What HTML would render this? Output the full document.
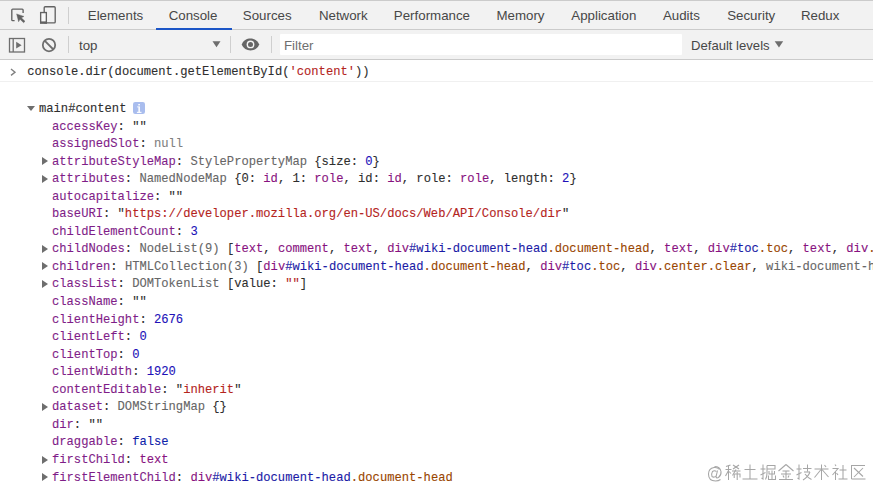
<!DOCTYPE html>
<html><head><meta charset="utf-8">
<style>
*{margin:0;padding:0;box-sizing:border-box}
html,body{width:873px;height:489px;overflow:hidden;background:#fff}
body{position:relative;font-family:"Liberation Sans",sans-serif}
.abs{position:absolute}
#tabbar{left:0;top:0;width:873px;height:30px;background:#f2f2f2;border-top:1px solid #cbcbcb;border-bottom:1px solid #cbcbcb}
.tab{position:absolute;top:7px;font-size:13.3px;line-height:16px;color:#474747;white-space:nowrap}
#toolbar{left:0;top:30px;width:873px;height:30px;background:#f2f2f2;border-bottom:1px solid #cbcbcb}
.sep{position:absolute;width:1px;background:#cfcfcf}
.mono{font-family:"Liberation Mono",monospace;font-size:12.15px;white-space:pre;color:#2e2e2e;-webkit-text-stroke:0.1px currentColor}
.row{position:absolute;left:0;height:17.55px;line-height:17.55px;width:873px}
.p{color:#7f1d88}
.s{color:#b4241d}
.n{color:#2010b8}
.g{color:#808080}
.o{color:#666}
.t{color:#881280}
.id{color:#1a1aa6}
.c{color:#994500}
.b{color:#0d22aa}
.tri{position:absolute;width:0;height:0}
.tr{border-left:6.2px solid #6e6e6e;border-top:4px solid transparent;border-bottom:4px solid transparent}
.td{border-top:5.8px solid #6e6e6e;border-left:4.2px solid transparent;border-right:4.2px solid transparent}
.info{display:inline-block;position:relative;top:1px;vertical-align:top;margin-left:-1px}
</style></head><body>
<div id="tabbar" class="abs">
  <svg class="abs" style="left:0;top:-1px" width="70" height="30" viewBox="0 0 70 30">
    <path d="M14.6 20.6 H12.7 a0.9 0.9 0 0 1 -0.9 -0.9 V10 a0.9 0.9 0 0 1 0.9 -0.9 H22.2 a0.9 0.9 0 0 1 0.9 0.9 V13" fill="none" stroke="#626262" stroke-width="1.35"/>
    <path d="M16.6 13.9 L24 16.4 L21.4 17.8 L25 21.3 L23.6 22.7 L20 19.2 L18.6 21.8 Z" fill="#626262" stroke="#626262" stroke-width="0.4" stroke-linejoin="round"/>
    <rect x="44.2" y="6.7" width="11" height="16.2" rx="1" fill="none" stroke="#626262" stroke-width="1.35"/>
    <rect x="40.65" y="12.55" width="5.7" height="10.4" fill="#f9f9f9" stroke="#626262" stroke-width="1.35"/>
    <rect x="40" y="21.4" width="7" height="2.2" fill="#626262"/>
  </svg>
  <div class="sep" style="left:68px;top:6px;height:17px"></div>
  <div class="tab" style="left:87.8px">Elements</div>
  <div class="tab" style="left:168.7px">Console</div>
  <div class="tab" style="left:242.8px">Sources</div>
  <div class="tab" style="left:318.9px">Network</div>
  <div class="tab" style="left:393.85px">Performance</div>
  <div class="tab" style="left:496.45px">Memory</div>
  <div class="tab" style="left:571.3px">Application</div>
  <div class="tab" style="left:662.9px">Audits</div>
  <div class="tab" style="left:727.2px">Security</div>
  <div class="tab" style="left:800.9px">Redux</div>
  <div class="abs" style="left:156px;top:27px;width:76px;height:2px;background:#1c56c7"></div>
</div>
<div id="toolbar" class="abs">
  <svg class="abs" style="left:0;top:0" width="280" height="29" viewBox="0 0 280 29">
    <rect x="9.5" y="8.5" width="15" height="13.5" fill="none" stroke="#6e6e6e" stroke-width="1.3"/>
    <line x1="13.2" y1="8.5" x2="13.2" y2="22" stroke="#6e6e6e" stroke-width="1.3"/>
    <path d="M16.2 11.7 L21.6 15.15 L16.2 18.6 Z" fill="#6e6e6e"/>
    <circle cx="49" cy="15.1" r="6.2" fill="none" stroke="#6e6e6e" stroke-width="1.8"/>
    <line x1="44.6" y1="10.7" x2="53.4" y2="19.5" stroke="#6e6e6e" stroke-width="1.8"/>
    <path d="M212.5 11.2 H220.5 L216.5 17.2 Z" fill="#6e6e6e"/>
    <path d="M241.8 14.5 C244.5 6.6, 256.5 6.6, 259.2 14.5 C256.5 22.4, 244.5 22.4, 241.8 14.5 Z" fill="#666"/>
    <circle cx="250.5" cy="14.4" r="3.9" fill="#f3f3f3"/>
    <circle cx="250.5" cy="14.4" r="2.5" fill="#666"/>
  </svg>
  <div class="sep" style="left:68px;top:6px;height:17px"></div>
  <div class="tab" style="left:79px;top:8px">top</div>
  <div class="sep" style="left:230px;top:6px;height:17px"></div>
  <div class="sep" style="left:271px;top:6px;height:17px"></div>
  <div class="abs" style="left:279.5px;top:4px;width:402.5px;height:21px;background:#fff;border-radius:1px"></div>
  <div class="tab" style="left:284px;top:8px;color:#6f6f6f">Filter</div>
  <div class="tab" style="left:691px;top:8px;font-size:13.1px">Default levels</div>
  <svg class="abs" style="left:770px;top:0" width="20" height="29" viewBox="0 0 20 29"><path d="M4.7 11.3 H13.2 L8.95 17.6 Z" fill="#6e6e6e"/></svg>
</div>
<div class="abs" style="left:0;top:81px;width:873px;height:1px;background:#f0f0f0"></div>
<svg class="abs" style="left:8px;top:66px" width="12" height="12" viewBox="0 0 12 12"><path d="M3 3 L7 6.2 L3 9.4" fill="none" stroke="#808080" stroke-width="1.4"/></svg>
<div class="mono">
<div class="row" style="top:64px;left:27.2px">console.dir(document.getElementById(<span class="s">'content'</span>))</div>
<div class="row" style="top:101px;left:39px"><span class="h">main#content</span> <svg class="info" width="12" height="12" viewBox="0 0 12 12"><rect x="0" y="0" width="12" height="12" rx="2.2" fill="#a9bdee"/><rect x="5.3" y="2" width="1.6" height="1.4" fill="#fff"/><rect x="5.4" y="4.4" width="1.5" height="6" fill="#fff"/><rect x="4.2" y="4.4" width="1.4" height="1" fill="#fff"/><rect x="3.9" y="9.8" width="4.6" height="1.1" fill="#fff"/></svg></div>
<div class="tri td" style="left:27px;top:106px"></div>
<div class="row" style="top:119px;left:52px"><span class="p">accessKey</span>: ""</div>
<div class="row" style="top:136px;left:52px"><span class="p">assignedSlot</span>: <span class="g">null</span></div>
<div class="row" style="top:154px;left:52px"><span class="p">attributeStyleMap</span>: <span class="o">StylePropertyMap</span> {size: <span class="n">0</span>}</div>
<div class="tri tr" style="left:42px;top:157.15px"></div>
<div class="row" style="top:171px;left:52px"><span class="p">attributes</span>: <span class="o">NamedNodeMap</span> {0: <span class="t">id</span>, 1: <span class="t">role</span>, id: <span class="t">id</span>, role: <span class="t">role</span>, length: <span class="n">2</span>}</div>
<div class="tri tr" style="left:42px;top:174.70px"></div>
<div class="row" style="top:189px;left:52px"><span class="p">autocapitalize</span>: ""</div>
<div class="row" style="top:206px;left:52px"><span class="p">baseURI</span>: "<span class="s">https://developer.mozilla.org/en-US/docs/Web/API/Console/dir</span>"</div>
<div class="row" style="top:224px;left:52px"><span class="p">childElementCount</span>: <span class="n">3</span></div>
<div class="row" style="top:241px;left:52px"><span class="p">childNodes</span>: <span class="o">NodeList(9)</span> [<span class="t">text</span>, <span class="t">comment</span>, <span class="t">text</span>, <span class="t">div</span><span class="id">#wiki-document-head</span><span class="c">.document-head</span>, <span class="t">text</span>, <span class="t">div</span><span class="id">#toc</span><span class="c">.toc</span>, <span class="t">text</span>, <span class="t">div</span><span class="c">.center.clear</span></div>
<div class="tri tr" style="left:42px;top:244.90px"></div>
<div class="row" style="top:259px;left:52px"><span class="p">children</span>: <span class="o">HTMLCollection(3)</span> [<span class="t">div</span><span class="id">#wiki-document-head</span><span class="c">.document-head</span>, <span class="t">div</span><span class="id">#toc</span><span class="c">.toc</span>, <span class="t">div</span><span class="c">.center.clear</span>, <span class="o">wiki-document-head</span></div>
<div class="tri tr" style="left:42px;top:262.45px"></div>
<div class="row" style="top:276px;left:52px"><span class="p">classList</span>: <span class="o">DOMTokenList</span> [value: <span class="s">""</span>]</div>
<div class="tri tr" style="left:42px;top:280.00px"></div>
<div class="row" style="top:294px;left:52px"><span class="p">className</span>: ""</div>
<div class="row" style="top:312px;left:52px"><span class="p">clientHeight</span>: <span class="n">2676</span></div>
<div class="row" style="top:329px;left:52px"><span class="p">clientLeft</span>: <span class="n">0</span></div>
<div class="row" style="top:347px;left:52px"><span class="p">clientTop</span>: <span class="n">0</span></div>
<div class="row" style="top:364px;left:52px"><span class="p">clientWidth</span>: <span class="n">1920</span></div>
<div class="row" style="top:382px;left:52px"><span class="p">contentEditable</span>: "<span class="s">inherit</span>"</div>
<div class="row" style="top:399px;left:52px"><span class="p">dataset</span>: <span class="o">DOMStringMap</span> {}</div>
<div class="tri tr" style="left:42px;top:402.85px"></div>
<div class="row" style="top:417px;left:52px"><span class="p">dir</span>: ""</div>
<div class="row" style="top:434px;left:52px"><span class="p">draggable</span>: <span class="b">false</span></div>
<div class="row" style="top:452px;left:52px"><span class="p">firstChild</span>: <span class="t">text</span></div>
<div class="tri tr" style="left:42px;top:455.50px"></div>
<div class="row" style="top:470px;left:52px"><span class="p">firstElementChild</span>: <span class="t">div</span><span class="id">#wiki-document-head</span><span class="c">.document-head</span></div>
<div class="tri tr" style="left:42px;top:473.05px"></div>
</div>
<svg class="abs" style="left:0;top:0" width="873" height="489" viewBox="0 0 873 489"><g fill="none" stroke="#a6a6a6" stroke-width="1.05" stroke-linecap="butt"><path d="M719.5 469.5 Q717.5 467 714 467.5 Q708.5 468.5 708.5 474 Q708.5 481 715.5 481 Q718.5 481 720.5 479.5" /><path d="M717.5 470.5 L716 477 Q716.5 478.5 718.5 477.5 Q721.5 475 721 471.5 Q720 466.5 714.5 466.5"/><path d="M716.5 471.5 Q714.5 470 712.5 471.5 Q711 474 712 476.5 Q714 478 716 476"/><path transform="translate(725 464)" d="M1 2.5 L5.5 1"/><path transform="translate(725 464)" d="M0.5 5.5 H6.5"/><path transform="translate(725 464)" d="M3.5 1.5 V16"/><path transform="translate(725 464)" d="M3.5 6.5 L0.5 12"/><path transform="translate(725 464)" d="M4 7.5 L6 9.5"/><path transform="translate(725 464)" d="M8 1 L14 5"/><path transform="translate(725 464)" d="M14 1 L8 5"/><path transform="translate(725 464)" d="M7 7 H15.5"/><path transform="translate(725 464)" d="M11 5.5 L7.5 11.5"/><path transform="translate(725 464)" d="M9.2 10 V14"/><path transform="translate(725 464)" d="M9.2 10 H15 V13.5"/><path transform="translate(725 464)" d="M12.2 8 V16"/><path transform="translate(742 464)" d="M2.5 5.5 H13.5"/><path transform="translate(742 464)" d="M8 0.5 V15"/><path transform="translate(742 464)" d="M0.5 15 H15.5"/><path transform="translate(760 464)" d="M0.5 5 H5.5"/><path transform="translate(760 464)" d="M3 0.5 V15 L1.5 14"/><path transform="translate(760 464)" d="M0.5 11 L5.5 8.5"/><path transform="translate(760 464)" d="M7 1.5 H15 V5 H7"/><path transform="translate(760 464)" d="M7 1.5 V9 Q7 13 5.5 15.5"/><path transform="translate(760 464)" d="M9 7 V10 H14.5 V7"/><path transform="translate(760 464)" d="M8.5 11.5 V15.5 H15.5 V11.5"/><path transform="translate(760 464)" d="M12 6.5 V15.5"/><path transform="translate(778 464)" d="M8 0.5 L0.5 7"/><path transform="translate(778 464)" d="M8 0.5 L15.5 7"/><path transform="translate(778 464)" d="M4.5 7 H11.5"/><path transform="translate(778 464)" d="M3 10 H13"/><path transform="translate(778 464)" d="M8 7 V15"/><path transform="translate(778 464)" d="M5 11.5 L6 13.5"/><path transform="translate(778 464)" d="M11 11.5 L10 13.5"/><path transform="translate(778 464)" d="M1 15.5 H15"/><path transform="translate(796 464)" d="M0.5 5 H5.5"/><path transform="translate(796 464)" d="M3 0.5 V15 L1.5 14"/><path transform="translate(796 464)" d="M0.5 11 L5.5 8.5"/><path transform="translate(796 464)" d="M7 4.5 H15.5"/><path transform="translate(796 464)" d="M11.5 0.5 V7.5"/><path transform="translate(796 464)" d="M8 8 H14"/><path transform="translate(796 464)" d="M14 8 Q12 13 7 16"/><path transform="translate(796 464)" d="M9 10 Q12 14 15.5 15.5"/><path transform="translate(813.5 464)" d="M1 5 H15"/><path transform="translate(813.5 464)" d="M8 0.5 V16"/><path transform="translate(813.5 464)" d="M7.5 5.5 L1 13.5"/><path transform="translate(813.5 464)" d="M8.5 5.5 L15 13"/><path transform="translate(813.5 464)" d="M11 1 L12.5 3"/><path transform="translate(832 464)" d="M3 0.5 L4 2"/><path transform="translate(832 464)" d="M0.5 4.5 H6 L0.5 11"/><path transform="translate(832 464)" d="M3.5 8 V16"/><path transform="translate(832 464)" d="M4.5 9 L6 11"/><path transform="translate(832 464)" d="M7.5 6 H14.5"/><path transform="translate(832 464)" d="M11 1 V15"/><path transform="translate(832 464)" d="M6.5 15 H15.5"/><path transform="translate(850 464)" d="M1 1.5 H15"/><path transform="translate(850 464)" d="M1.5 1.5 V15"/><path transform="translate(850 464)" d="M1.5 15 H15.5"/><path transform="translate(850 464)" d="M4 4 L13 12.5"/><path transform="translate(850 464)" d="M13 4 L4 13"/></g></svg>
</body></html>
